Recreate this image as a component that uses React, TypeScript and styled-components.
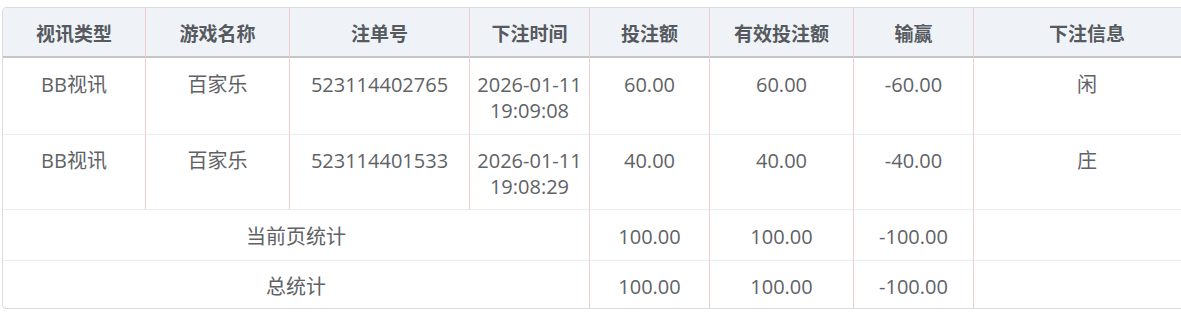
import React from "react";
import styled, { createGlobalStyle } from "styled-components";

const Global = createGlobalStyle`
  html, body { margin: 0; padding: 0; background: #ffffff; overflow: hidden; }
  body { font-family: "Open Sans", "Noto Sans CJK SC", sans-serif; }
`;

const Page = styled.div`
  padding: 7px 0 0 2px;
  width: 1199px;
`;

const Frame = styled.div`
  width: 1199px;
  border: 1px solid #dcdcdc;
  border-radius: 4px;
  overflow: hidden;
  box-sizing: border-box;
`;

const Table = styled.table`
  width: 100%;
  border-collapse: separate;
  border-spacing: 0;
  table-layout: fixed;
  font-size: 20px;
  color: #606266;
`;

const HeadCell = styled.th`
  background: #eff3f7;
  height: 48px;
  padding: 0 6px;
  font-family: "Noto Sans CJK SC", sans-serif;
  font-size: 19px;
  font-weight: 700;
  color: #565a5f;
  text-align: center;
  border-bottom: 2px solid #c6c6c6;
  border-left: 1px solid #f1cdd0;
  &:first-child { border-left: none; }
`;

const Cell = styled.td<{ $pad: string; $first?: boolean }>`
  text-align: center;
  vertical-align: top;
  line-height: 26px;
  padding: ${(p) => p.$pad};
  border-top: 1px solid ${(p) => (p.$first ? "transparent" : "#ececec")};
  border-left: 1px solid #f1cdd0;
  white-space: nowrap;
  &:first-child { border-left: none; }
`;

type Bet = {
  type: string;
  game: string;
  id: string;
  date: string;
  time: string;
  amount: string;
  valid: string;
  win: string;
  info: string;
};

const bets: Bet[] = [
  { type: "BB视讯", game: "百家乐", id: "523114402765", date: "2026-01-11", time: "19:09:08", amount: "60.00", valid: "60.00", win: "-60.00", info: "闲" },
  { type: "BB视讯", game: "百家乐", id: "523114401533", date: "2026-01-11", time: "19:08:29", amount: "40.00", valid: "40.00", win: "-40.00", info: "庄" },
];

const widths = [142, 144, 180, 120, 120, 144, 120, 227];
const heads = ["视讯类型", "游戏名称", "注单号", "下注时间", "投注额", "有效投注额", "输赢", "下注信息"];

const totals = [
  { label: "当前页统计", amount: "100.00", valid: "100.00", win: "-100.00", pad: "14px 4px 10px" },
  { label: "总统计", amount: "100.00", valid: "100.00", win: "-100.00", pad: "13px 4px 8px" },
];

export default function App() {
  return (
    <Page>
      <Global />
      <Frame>
        <Table>
          <colgroup>
            {widths.map((w, i) => (
              <col key={i} style={{ width: w }} />
            ))}
          </colgroup>
          <thead>
            <tr>
              {heads.map((h) => (
                <HeadCell key={h}>{h}</HeadCell>
              ))}
            </tr>
          </thead>
          <tbody>
            {bets.map((b, i) => {
              const first = i === 0;
              const pad = first ? "13px 4px 10px" : "13px 4px 9px";
              const cells = [b.type, b.game, b.id, null, b.amount, b.valid, b.win, b.info];
              return (
                <tr key={b.id}>
                  {cells.map((c, j) => (
                    <Cell key={j} $pad={pad} $first={first}>
                      {c === null ? (
                        <>
                          {b.date}
                          <br />
                          {b.time}
                        </>
                      ) : (
                        c
                      )}
                    </Cell>
                  ))}
                </tr>
              );
            })}
            {totals.map((t) => (
              <tr key={t.label}>
                <Cell $pad={t.pad} colSpan={4}>{t.label}</Cell>
                <Cell $pad={t.pad}>{t.amount}</Cell>
                <Cell $pad={t.pad}>{t.valid}</Cell>
                <Cell $pad={t.pad}>{t.win}</Cell>
                <Cell $pad={t.pad} />
              </tr>
            ))}
          </tbody>
        </Table>
      </Frame>
    </Page>
  );
}
